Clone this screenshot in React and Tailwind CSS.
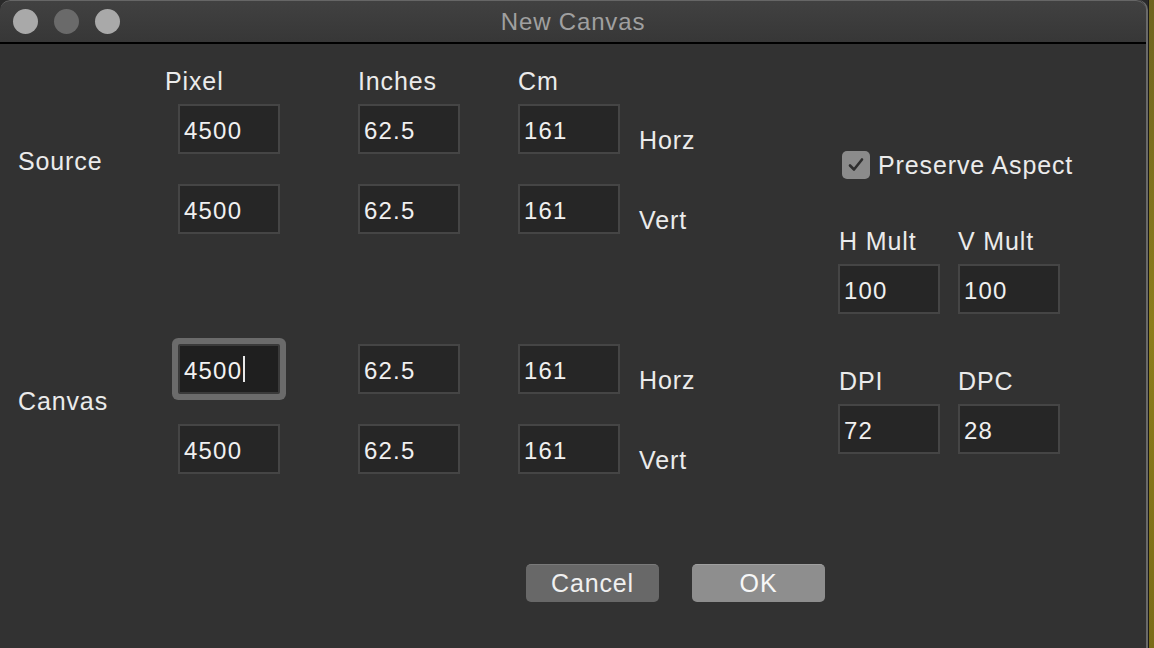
import React from "react";

const font = { fontFamily: '"Liberation Sans", Arial, sans-serif' };

function Field({ value, focused }) {
  if (focused) {
    return (
      <div className="w-[102px] h-[50px] flex-none rounded-[2px] bg-[#1f1f1f] border-2 border-[#3a3a3a] ring-[6px] ring-[#6b6b6b] flex items-center pl-[4px] pt-[3px] text-[24px] tracking-[0.05em] text-[#f2f2f2]">
        <span>{value}</span>
        <span className="ml-[1px] w-[2px] h-[26px] bg-[#e8e8e8] -mt-[3px]" />
      </div>
    );
  }
  return (
    <div className="w-[102px] h-[50px] flex-none bg-[#262626] border-2 border-[#454545] flex items-center pl-[4px] pt-[3px] text-[24px] tracking-[0.05em] text-[#f0f0f0]">
      {value}
    </div>
  );
}

function Row({ suffix, focusFirst }) {
  return (
    <div className="flex h-[50px]">
      <Field value="4500" focused={focusFirst} />
      <div className="w-[78px] flex-none" />
      <Field value="62.5" />
      <div className="w-[58px] flex-none" />
      <Field value="161" />
      <div className="ml-[19px] mt-[22px] h-[28px] leading-[28px] text-[25px] tracking-[0.035em] text-[#ebebeb]">
        {suffix}
      </div>
    </div>
  );
}

function Group({ label, focusFirst }) {
  return (
    <div className="flex">
      <div className="w-[178px] flex-none pl-[18px] mt-[42px] h-[30px] leading-[30px] text-[25px] tracking-[0.035em] text-[#ebebeb]">
        {label}
      </div>
      <div className="flex flex-col gap-[30px]">
        <Row suffix="Horz" focusFirst={focusFirst} />
        <Row suffix="Vert" />
      </div>
    </div>
  );
}

function Label({ children, className = "" }) {
  return (
    <div className={`h-[30px] leading-[30px] text-[25px] tracking-[0.035em] text-[#ebebeb] ${className}`}>
      {children}
    </div>
  );
}

export default function App() {
  return (
    <div style={font} className="w-[1154px] h-[648px] flex bg-[#2a2a2a] overflow-hidden">
      <div className="w-[1148px] h-[648px] flex-none flex flex-col rounded-t-[10px] overflow-hidden border-r-[2px] border-[#6a6a6a] bg-[#323232]">
        {/* Title bar */}
        <div className="relative h-[42px] flex-none flex items-center bg-gradient-to-b from-[#414141] to-[#373737] border-t border-[#666] rounded-t-[10px]">
          <div className="flex items-center gap-[16px] ml-[13px]">
            <div className="w-[25px] h-[25px] rounded-full bg-[#a9a9a9]" />
            <div className="w-[25px] h-[25px] rounded-full bg-[#6a6a6a]" />
            <div className="w-[25px] h-[25px] rounded-full bg-[#a9a9a9]" />
          </div>
          <div className="absolute inset-0 flex items-center justify-center text-[24px] text-[#a0a0a0] tracking-[0.035em] pointer-events-none">
            New Canvas
          </div>
        </div>
        <div className="h-[2px] flex-none bg-black" />
        {/* Body */}
        <div className="flex flex-1">
          <div className="w-[838px] flex-none flex flex-col">
            <div className="flex mt-[22px] h-[30px]">
              <div className="w-[165px] flex-none" />
              <Label className="w-[193px] flex-none">Pixel</Label>
              <Label className="w-[160px] flex-none">Inches</Label>
              <Label>Cm</Label>
            </div>
            <div className="mt-[8px]">
              <Group label="Source" />
            </div>
            <div className="mt-[110px]">
              <Group label="Canvas" focusFirst />
            </div>
            <div className="flex mt-[90px] ml-[526px] gap-[33px]">
              <div className="w-[133px] h-[38px] rounded-[5px] bg-[#686868] border-t border-[#7a7a7a] flex items-center justify-center text-[25px] tracking-[0.035em] text-[#f0f0f0]">
                Cancel
              </div>
              <div className="w-[133px] h-[38px] rounded-[5px] bg-[#8e8e8e] border-t border-[#a0a0a0] flex items-center justify-center text-[25px] tracking-[0.035em] text-[#f7f7f7]">
                OK
              </div>
            </div>
          </div>
          <div className="flex flex-col pt-[106px]">
            <div className="flex items-center ml-[4px] h-[30px]">
              <div className="w-[28px] h-[28px] rounded-[5px] bg-[#8b8b8b] flex items-center justify-center">
                <svg width="20" height="20" viewBox="0 0 20 20" fill="none">
                  <path d="M4 10.5 L8 14.5 L16 4.5" stroke="#2e2e2e" strokeWidth="2.6" strokeLinecap="round" strokeLinejoin="round" />
                </svg>
              </div>
              <Label className="ml-[8px]">Preserve Aspect</Label>
            </div>
            <div className="flex mt-[46px]">
              <Label className="w-[120px] flex-none pl-[1px]">H Mult</Label>
              <Label>V Mult</Label>
            </div>
            <div className="flex gap-[18px] mt-[8px]">
              <Field value="100" />
              <Field value="100" />
            </div>
            <div className="flex mt-[52px]">
              <Label className="w-[120px] flex-none pl-[1px]">DPI</Label>
              <Label>DPC</Label>
            </div>
            <div className="flex gap-[18px] mt-[8px]">
              <Field value="72" />
              <Field value="28" />
            </div>
          </div>
        </div>
      </div>
      <div className="w-[1px] flex-none bg-[#1a1a1a]" />
      <div className="flex-1 bg-gradient-to-b from-[#6e6420] via-[#8c7d1c] to-[#7a6c18]" />
    </div>
  );
}
